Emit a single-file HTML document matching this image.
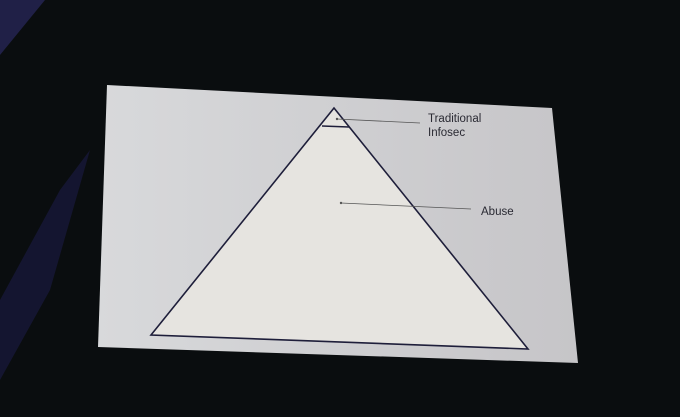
<!DOCTYPE html>
<html><head><style>html,body{margin:0;padding:0;width:680px;height:417px;overflow:hidden;background:#0a0d0f}</style></head>
<body>
<svg width="680" height="417" viewBox="0 0 680 417" xmlns="http://www.w3.org/2000/svg">
<defs>
<linearGradient id="s" x1="0" y1="0" x2="1" y2="0">
<stop offset="0" stop-color="#d8d9db"/><stop offset="1" stop-color="#c6c5c8"/>
</linearGradient>
</defs>
<rect width="680" height="417" fill="#0a0d0f"/>
<polygon points="0,0 45,0 0,55" fill="#2a2a60" opacity="0.7"/>
<polygon points="0,300 60,190 90,150 50,290 0,380" fill="#1e1e4c" opacity="0.55"/>
<polygon points="107,85 552,108 578,363 98,347" fill="url(#s)"/>
<polygon points="334,108 151,335 528,349" fill="#e6e4e0" stroke="#1e1e3a" stroke-width="1.6"/>
<line x1="322" y1="126" x2="349" y2="127" stroke="#1e1e3a" stroke-width="1.4"/>
<line x1="337" y1="119" x2="420" y2="123" stroke="#555" stroke-width="0.8"/>
<circle cx="337" cy="119" r="1.2" fill="#555"/>
<line x1="341" y1="203" x2="471" y2="209" stroke="#555" stroke-width="0.8"/>
<circle cx="341" cy="203" r="1.2" fill="#555"/>
<g font-family="Liberation Sans, sans-serif" font-size="11.5" fill="#2a2a33">
<text x="428" y="122">Traditional</text>
<text x="428" y="136">Infosec</text>
<text x="481" y="215">Abuse</text>
</g>
</svg>
</body></html>
